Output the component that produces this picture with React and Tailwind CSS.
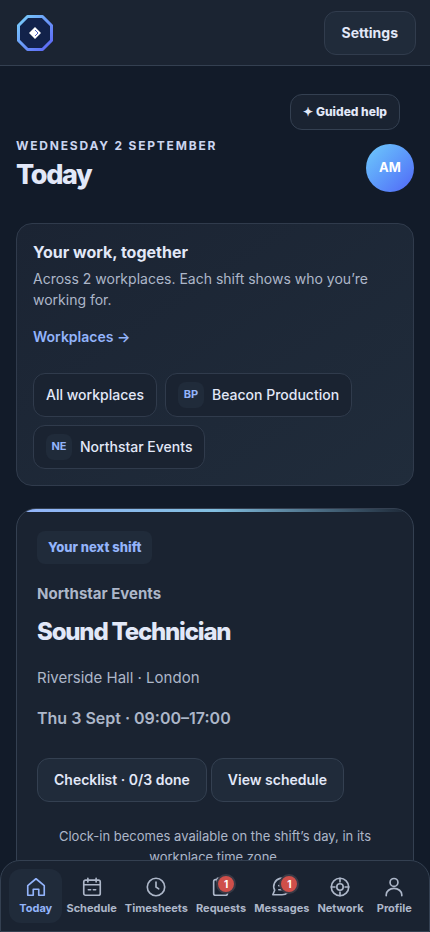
import { useState } from 'react'

const workplaces = [
  { id: 'all', name: 'All workplaces' },
  { id: 'bp', name: 'Beacon Production', initials: 'BP' },
  { id: 'ne', name: 'Northstar Events', initials: 'NE' }
]

const tabs = [
  { label: 'Today', icon: HomeIcon },
  { label: 'Schedule', icon: CalendarIcon },
  { label: 'Timesheets', icon: ClockIcon },
  { label: 'Requests', icon: ClipboardIcon, badge: 1 },
  { label: 'Messages', icon: ChatIcon, badge: 1 },
  { label: 'Network', icon: NetworkIcon },
  { label: 'Profile', icon: ProfileIcon }
]

function Icon({ children }) {
  return (
    <svg
      viewBox="0 0 24 24"
      className="w-[22px] h-[22px]"
      fill="none"
      stroke="currentColor"
      strokeWidth="1.8"
      strokeLinecap="round"
      strokeLinejoin="round"
      aria-hidden="true"
    >
      {children}
    </svg>
  )
}

function HomeIcon() {
  return (
    <Icon>
      <path d="M3 10.500 12 3l9 7.500V21h-6v-6.500H9V21H3z" />
    </Icon>
  )
}

function CalendarIcon() {
  return (
    <Icon>
      <rect x="3" y="4.500" width="18" height="16.500" rx="2" />
      <path d="M7.500 2.500v4M16.500 2.500v4M3 9.500h18M8 15h2.500M13.500 15H16" />
    </Icon>
  )
}

function ClockIcon() {
  return (
    <Icon>
      <circle cx="12" cy="12" r="9.500" />
      <path d="M12 6.500V12l3 2" />
    </Icon>
  )
}

function ClipboardIcon() {
  return (
    <Icon>
      <path d="M8 4H6a2 2 0 0 0-2 2v13a2 2 0 0 0 2 2h11a2 2 0 0 0 2-2V6a2 2 0 0 0-2-2h-1" />
      <path d="M8 2.500h8v4H8z" />
    </Icon>
  )
}

function ChatIcon() {
  return (
    <Icon>
      <path d="M21 11.500a9 9 0 0 1-9 9H2l2-5A9 9 0 1 1 21 11.500z" />
      <path d="M8.500 10.500h7M8.500 15h5" />
    </Icon>
  )
}

function NetworkIcon() {
  return (
    <Icon>
      <circle cx="12" cy="12" r="9.500" />
      <circle cx="12" cy="12" r="3.500" />
      <path d="M12 2.500v4M12 17.500v4M2.500 12h4M17.500 12h4" />
    </Icon>
  )
}

function ProfileIcon() {
  return (
    <Icon>
      <circle cx="12" cy="7" r="4.300" />
      <path d="M3.500 21.500v-1a8.500 7 0 0 1 17 0v1" />
    </Icon>
  )
}

function Logo() {
  return (
    <svg viewBox="0 0 38 38" className="w-[38px] h-[38px]" aria-hidden="true">
      <defs>
        <linearGradient id="ring" x1="0" y1="0" x2="1" y2="1">
          <stop offset="0" stopColor="#79cffa" />
          <stop offset="1" stopColor="#5b62f6" />
        </linearGradient>
      </defs>
      <path
        d="M11.500 2.500h15l9 9v15l-9 9h-15l-9-9v-15z"
        fill="#12224a"
        stroke="url(#ring)"
        strokeWidth="3"
        strokeLinejoin="round"
      />
      <path d="m19 13 6 6-6 6-6-6z" fill="#fff" />
      <path d="m19 16 3 3-3 3" fill="none" stroke="#4c5fc4" strokeWidth="1" />
    </svg>
  )
}

export default function App() {
  const [activeTab, setActiveTab] = useState('Today')

  return (
    <div className="min-h-screen bg-[#121b29] text-[#e2e8f8] font-['Inter',sans-serif]">
      {/* Top bar */}
      <header className="flex items-center justify-between h-[66px] pl-4 pr-3.5 bg-[#1b2432] border-b border-[#344051]">
        <a href="#home" aria-label="Home"><Logo /></a>
        <button className="h-11 px-[17px] rounded-xl border border-[#313c4d] bg-[#202b3a] text-sm font-bold">
          Settings
        </button>
      </header>

      <main className="px-4 pt-7 pb-24">
        <div className="flex justify-end pr-3.5">
          <button className="h-9 px-3 rounded-xl border border-[#344051] bg-[#1a2331] text-xs font-extrabold">
            ✦ Guided help
          </button>
        </div>

        {/* Page heading */}
        <div className="flex items-center justify-between mt-2">
          <div>
            <p className="text-xs leading-4 font-bold uppercase tracking-[0.15em] text-[#cbd5f0]">Wednesday 2 September</p>
            <h1 className="text-[27px] leading-9 font-extrabold tracking-tighter mt-[3px]">Today</h1>
          </div>
          <div className="flex items-center justify-center w-12 h-12 mt-1 rounded-full bg-linear-to-br from-[#6fcbfb] to-[#5264f6] text-white text-[13px] font-bold">
            AM
          </div>
        </div>

        {/* Workplaces */}
        <section className="mt-[30px] p-4 rounded-2xl border border-[#303b4c] bg-linear-to-br from-[#1b2433] to-[#202c3b]">
          <h2 className="text-base leading-6 font-bold">Your work, together</h2>
          <p className="mt-1 text-sm leading-[21px] text-[#adb7c9]">
            Across 2 workplaces. Each shift shows who you’re working for.
          </p>
          <a href="#workplaces" className="flex items-center h-11 mt-[5px] text-sm font-semibold text-[#93b4fb]">
            Workplaces →
          </a>
          <div className="flex flex-wrap gap-2 mt-3.5">
            {workplaces.map(({ id, name, initials }) => (
              <button
                key={id}
                className="flex items-center gap-2 h-11 px-3 rounded-xl border border-[#303b4c] bg-[#1a2331] text-sm font-medium"
              >
                {initials && (
                  <span className="flex items-center justify-center w-[26px] h-[26px] rounded-lg bg-[#202b3a] text-[11px] font-bold text-[#93b4fb]">
                    {initials}
                  </span>
                )}
                {name}
              </button>
            ))}
          </div>
        </section>

        {/* Next shift */}
        <section className="relative overflow-hidden mt-[22px] px-5 pt-[22px] pb-5 rounded-[20px] border border-[#344051] bg-[#1a2331]">
          <div className="absolute inset-x-0 top-0 h-[3px] bg-linear-to-r/srgb from-[#93b4fb] via-[#82bfe0] to-transparent" />
          <span className="inline-flex items-center h-[33px] px-[11px] rounded-lg bg-[#202b3a] text-[13px] font-extrabold text-[#93b4fb]">
            Your next shift
          </span>
          <p className="mt-[18px] text-[15px] leading-6 font-bold text-[#adb7c9]">Northstar Events</p>
          <h2 className="mt-2.5 text-2xl leading-8 font-extrabold tracking-tighter">Sound Technician</h2>
          <p className="mt-[18px] text-[15px] leading-6 text-[#adb7c9]">Riverside Hall · London</p>
          <p className="mt-4 text-base font-semibold text-[#adb7c9]">Thu 3 Sept · 09:00–17:00</p>
          <div className="flex flex-wrap gap-1 mt-7">
            <button className="h-11 px-4 rounded-xl border border-[#344051] bg-[#202b3a] text-sm font-semibold">
              Checklist · 0/3 done
            </button>
            <button className="h-11 px-4 rounded-xl border border-[#344051] bg-[#202b3a] text-sm font-semibold">
              View schedule
            </button>
          </div>
          <p className="mt-6 px-4 text-center text-[13px] leading-[21px] text-[#adb7c9]">
            Clock-in becomes available on the shift’s day, in its workplace time zone.
          </p>
        </section>
      </main>

      {/* Bottom tabs */}
      <nav className="fixed inset-x-0 bottom-0 flex p-2 rounded-t-[20px] border border-[#344051] bg-[#1a2331]">
        {tabs.map(({ label, icon: TabIcon, badge }) => (
          <button
            key={label}
            onClick={() => setActiveTab(label)}
            className={`relative flex flex-1 flex-col items-center justify-center gap-0.5 h-[54px] px-1 rounded-xl text-[11px] leading-4 font-bold ${
              activeTab === label ? 'bg-[#202b3a] text-[#93b4fb]' : 'text-[#adb7c9]'
            }`}
          >
            <TabIcon />
            {badge && (
              <span className="absolute top-[5px] right-3.5 flex items-center justify-center w-5 h-5 rounded-full border-2 border-[#3a3a46] bg-[#cf4f4a] text-[10px] font-bold text-white">
                {badge}
              </span>
            )}
            {label}
          </button>
        ))}
      </nav>
    </div>
  )
}
